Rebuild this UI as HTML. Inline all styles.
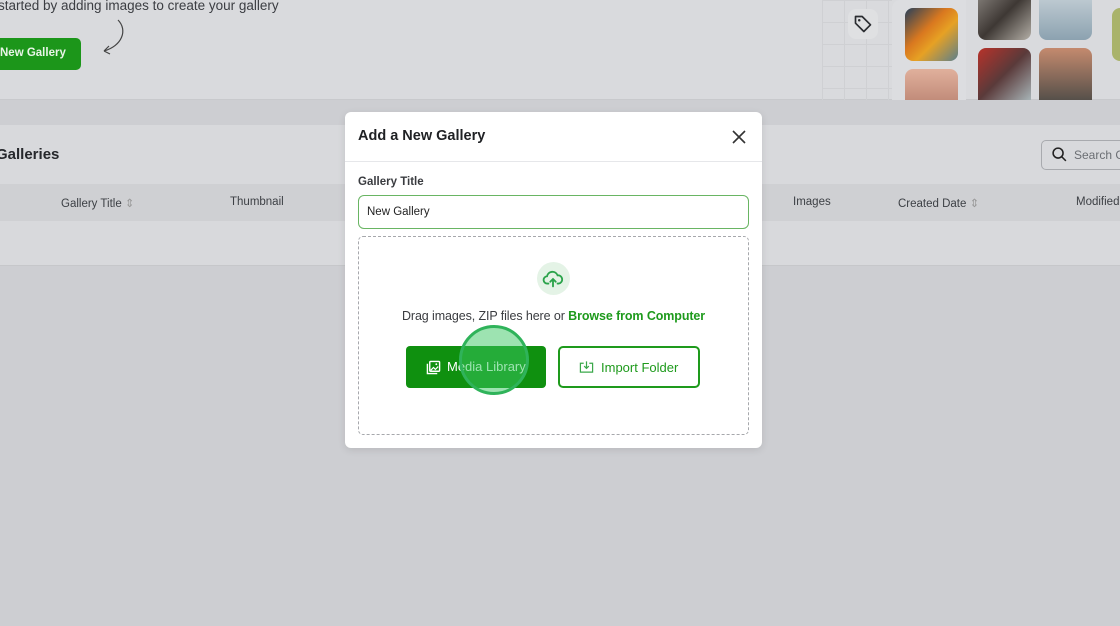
<!DOCTYPE html>
<html><head><style>
*{box-sizing:border-box;margin:0;padding:0}
body{width:1120px;height:626px;overflow:hidden;background:#cdced2;font-family:"Liberation Sans",sans-serif;position:relative;color:#222}
.abs{position:absolute}
.top{left:0;top:0;width:1120px;height:100px;background:#d9dadd;border-bottom:1px solid #c8c9cc}
.card{left:0;top:125px;width:1120px;height:141px;background:#d8d9dc;border-bottom:1px solid #c6c7ca}
.thead{left:0;top:184px;width:1120px;height:37px;background:#cfd0d3}
.th{position:absolute;top:196px;font-size:11.5px;color:#3d4045}
.img{position:absolute;border-radius:8px}
</style></head><body>
<div class="abs top"></div>
<div class="abs" style="left:-2px;top:-2px;font-size:13.5px;color:#3b3d42">started by adding images to create your gallery</div>
<div class="abs" style="left:-10px;top:38px;width:91px;height:32px;background:#1c961a;border-radius:5px;color:#e9f5e8;font-size:11.5px;font-weight:bold;padding:9px 0 0 10px">New Gallery</div>
<svg class="abs" style="left:100px;top:18px" width="28" height="40"><path d="M18 2 C28 12 22 28 4 33 M4 33 L9 28 M4 33 L10 36" fill="none" stroke="#444" stroke-width="1.2"/></svg>
<div class="abs" style="left:822px;top:0;width:70px;height:100px;background-image:linear-gradient(#cfd0d3 1px,transparent 1px),linear-gradient(90deg,#cfd0d3 1px,transparent 1px);background-size:22px 22px"></div>
<div class="abs" style="left:848px;top:9px;width:30px;height:30px;background:#dfe0e2;border-radius:8px"></div>
<svg class="abs" style="left:853px;top:14px" width="20" height="20" viewBox="0 0 24 24"><path d="M3 3h8l10 10-8 8L3 11z" fill="none" stroke="#2a2c30" stroke-width="2" stroke-linejoin="round"/><circle cx="7.5" cy="7.5" r="1.5" fill="#2a2c30"/></svg>
<div class="abs" style="left:892px;top:0;width:74px;height:100px;background:#dcdde0;border-radius:8px 0 0 0"></div>
<div class="img" style="left:905px;top:8px;width:53px;height:53px;background:linear-gradient(135deg,#27405a,#d9781f 40%,#e6a124 60%,#5c7f8c)"></div>
<div class="img" style="left:905px;top:69px;width:53px;height:31px;background:linear-gradient(#e0b09c,#c28c7a);border-radius:8px 8px 0 0"></div>
<div class="img" style="left:978px;top:-10px;width:53px;height:50px;background:linear-gradient(135deg,#8a8580,#3e3834 50%,#b3aea6)"></div>
<div class="img" style="left:1039px;top:-10px;width:53px;height:50px;background:linear-gradient(#c8d2d8,#8ca2b0)"></div>
<div class="img" style="left:978px;top:48px;width:53px;height:52px;background:linear-gradient(135deg,#b8322a,#5a3a3a 50%,#a7b3b6);border-radius:8px 8px 0 0"></div>
<div class="img" style="left:1039px;top:48px;width:53px;height:52px;background:linear-gradient(#c48a6e,#56504a);border-radius:8px 8px 0 0"></div>
<div class="img" style="left:1112px;top:8px;width:20px;height:53px;background:#a9b36a"></div>
<div class="abs card"></div>
<div class="abs" style="left:-4px;top:146px;font-size:15px;font-weight:bold;color:#26282c">Galleries</div>
<div class="abs" style="left:1041px;top:140px;width:100px;height:30px;border:1px solid #a8aaae;border-radius:5px;font-size:12px;color:#6b6e73;padding:7px 0 0 32px">Search G</div>
<svg class="abs" style="left:1051px;top:146px" width="17" height="17" viewBox="0 0 24 24"><circle cx="10" cy="10" r="7" fill="none" stroke="#222" stroke-width="2.2"/><path d="M15 15l6 6" stroke="#222" stroke-width="2.2"/></svg>
<div class="abs thead"></div>
<div class="th" style="left:61px">Gallery Title <span style="color:#999">⇕</span></div>
<div class="th" style="left:230px">Thumbnail</div>
<div class="th" style="left:793px">Images</div>
<div class="th" style="left:898px">Created Date <span style="color:#999">⇕</span></div>
<div class="th" style="left:1076px">Modified</div>

<div class="abs" style="left:345px;top:112px;width:417px;height:336px;background:#fff;border-radius:6px;box-shadow:0 2px 8px rgba(0,0,0,.1)">
  <div style="height:50px;border-bottom:1px solid #e6e7ea;padding:16px 0 0 13px;font-size:14.5px;font-weight:bold;color:#1f2124">Add a New Gallery</div>
  <svg style="position:absolute;left:387px;top:18px" width="14" height="14"><path d="M1 1L13 13M13 1L1 13" stroke="#333" stroke-width="1.6"/></svg>
  <div style="position:absolute;left:13px;top:64px;font-size:11.5px;font-weight:bold;color:#3a3c40">Gallery Title</div>
  <div style="position:absolute;left:13px;top:83px;width:391px;height:34px;border:1.5px solid #69b563;border-radius:6px;font-size:11.5px;color:#222;padding:10px 0 0 8px">New Gallery</div>
  <div style="position:absolute;left:13px;top:124px;width:391px;height:199px;border:1px dashed #a6a8ac;border-radius:5px"></div>
  <div style="position:absolute;left:192px;top:150px;width:33px;height:33px;border-radius:50%;background:#e4f3e6"></div>
  <svg style="position:absolute;left:197px;top:156px" width="22" height="22" viewBox="0 0 24 24"><path d="M7 17H6a4 4 0 0 1-.5-8A6 6 0 0 1 17 8a4.5 4.5 0 0 1 1 9h-1" fill="none" stroke="#2aa34a" stroke-width="2" stroke-linecap="round"/><path d="M12 20v-8M9 15l3-3 3 3" fill="none" stroke="#2aa34a" stroke-width="2" stroke-linecap="round"/></svg>
  <div style="position:absolute;left:0;width:417px;top:197px;text-align:center;font-size:12.5px;color:#3a3c40;letter-spacing:-0.1px">Drag images, ZIP files here or <b style="color:#1e9a1c">Browse from Computer</b></div>
  <div style="position:absolute;left:61px;top:234px;width:140px;height:42px;background:#0f900f;border-radius:4px;color:#fff;font-size:13px;padding:13px 0 0 41px">Media Library</div>
  <svg style="position:absolute;left:81px;top:248px" width="15" height="15" viewBox="0 0 16 16"><rect x="4" y="1.5" width="10.5" height="10.5" rx="1" fill="none" stroke="#fff" stroke-width="1.5"/><path d="M1.5 4v10.5H12" fill="none" stroke="#fff" stroke-width="1.5"/><path d="M5 11l3-3 2 2 3-3" fill="none" stroke="#fff" stroke-width="1.3"/><circle cx="11" cy="4.5" r="1" fill="#fff"/></svg>
  <div style="position:absolute;left:213px;top:234px;width:142px;height:42px;border:2px solid #1e9a1c;border-radius:5px;color:#1e9a1c;font-size:13px;padding:12px 0 0 41px">Import Folder</div>
  <svg style="position:absolute;left:234px;top:248px" width="15" height="14" viewBox="0 0 16 14"><path d="M5 3H1.5v9.5h13V3H11" fill="none" stroke="#3aa84a" stroke-width="1.3"/><path d="M8 1v7M5.5 6L8 8.5 10.5 6" fill="none" stroke="#3aa84a" stroke-width="1.3"/></svg>
  <div style="position:absolute;left:114px;top:213px;width:70px;height:70px;border-radius:50%;background:rgba(60,200,100,.5);border:3px solid #2fb35a"></div>
</div>
</body></html>
